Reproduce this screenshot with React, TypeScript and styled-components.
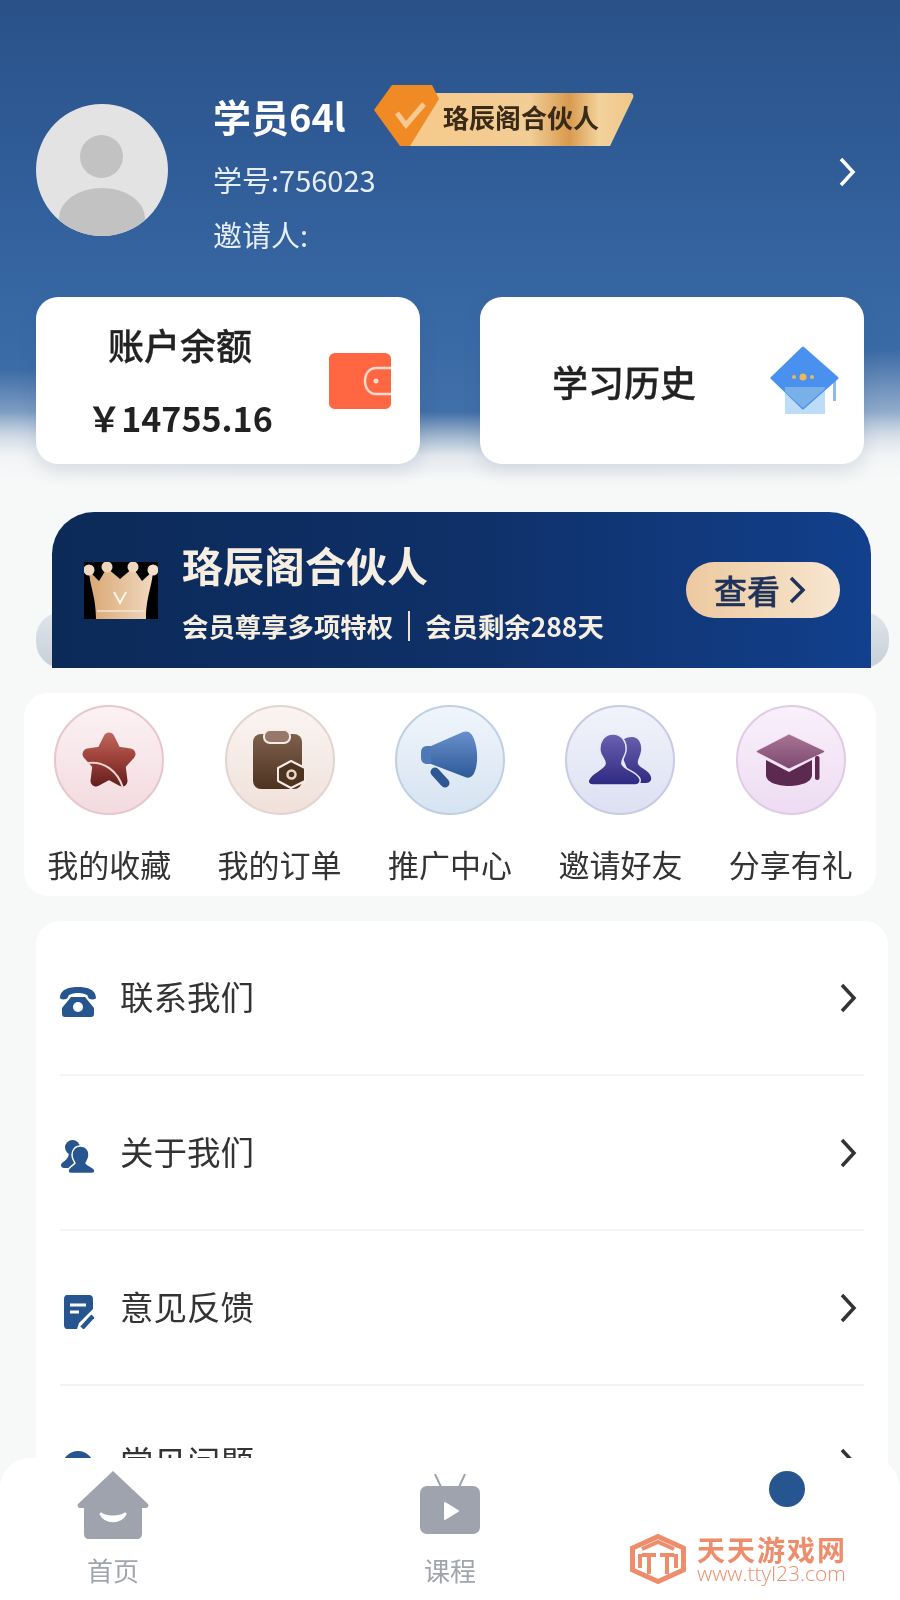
import * as React from "react";
import styled, { createGlobalStyle } from "styled-components";

const GlobalStyle = createGlobalStyle`
  html, body {
    margin: 0;
    padding: 0;
    background: #f7f8f8;
  }
  * {
    box-sizing: border-box;
  }
`;

type Shortcut = {
  label: string;
  from: string;
  to: string;
  ring: string;
  icon: React.ReactNode;
};

const shortcuts: Shortcut[] = [
  { label: "我的收藏", from: "#fbf1f3", to: "#f3dbe0", ring: "#e8c6cd", icon: <StarIcon /> },
  { label: "我的订单", from: "#faf5f2", to: "#f0e0d9", ring: "#e4d3d0", icon: <OrderIcon /> },
  { label: "推广中心", from: "#f0f5fc", to: "#d6e3f1", ring: "#bfd0e4", icon: <MegaphoneIcon /> },
  { label: "邀请好友", from: "#f1f3fb", to: "#dde0f2", ring: "#c8cbe3", icon: <FriendsIcon /> },
  { label: "分享有礼", from: "#f9f0fb", to: "#eedcf2", ring: "#e0cae6", icon: <CapIcon /> },
];

const menuItems = [
  { label: "联系我们", icon: <PhoneIcon /> },
  { label: "关于我们", icon: <PeopleIcon /> },
  { label: "意见反馈", icon: <NoteIcon /> },
  { label: "常见问题", icon: <HelpIcon /> },
];

function StarIcon() {
  return (
    <svg width="60" height="60" viewBox="0 0 60 60">
      <defs>
        <linearGradient id="starFill" gradientUnits="userSpaceOnUse" x1="0" y1="2" x2="0" y2="58">
          <stop offset="0" stopColor="#c0685c" />
          <stop offset="0.5" stopColor="#9a3f38" />
          <stop offset="1" stopColor="#5f1c1c" />
        </linearGradient>
      </defs>
      <path
        d="M30 8 L37 22 L51 24 L41 35 L43 51 L30 44 L17 51 L19 35 L9 24 L23 22 Z"
        fill="url(#starFill)"
        stroke="url(#starFill)"
        strokeWidth="11"
        strokeLinejoin="round"
      />
      <path d="M9 33 C25 31 39 41 44 58" fill="none" stroke="#efd6d2" strokeWidth="2" />
    </svg>
  );
}

function OrderIcon() {
  return (
    <svg width="56" height="60" viewBox="0 0 56 60">
      <defs>
        <linearGradient id="orderFill" x1="0" y1="0" x2="0" y2="1">
          <stop offset="0" stopColor="#7d5f4e" />
          <stop offset="1" stopColor="#4e3320" />
        </linearGradient>
      </defs>
      <rect x="1" y="4" width="49" height="55" rx="8" fill="url(#orderFill)" />
      <rect x="12" y="0" width="26" height="13" rx="6" fill="#97786a" stroke="#f6ece7" strokeWidth="2" />
      <path d="M39 31 L53 38 V51 L39 58 L26 51 V38 Z" fill="#4e3320" stroke="#f6ece7" strokeWidth="2" strokeLinejoin="round" />
      <circle cx="39.5" cy="44.5" r="4" fill="none" stroke="#e8d8c8" strokeWidth="2.5" />
    </svg>
  );
}

function MegaphoneIcon() {
  return (
    <svg width="58" height="58" viewBox="0 0 58 58">
      <defs>
        <linearGradient id="hornFill" x1="0" y1="0" x2="0" y2="1">
          <stop offset="0" stopColor="#6a90cc" />
          <stop offset="1" stopColor="#2d5a98" />
        </linearGradient>
      </defs>
      <path d="M6 15 H11 V33 H6 C2 33 0 30 0 27 V21 C0 18 2 15 6 15 Z" fill="#4f78b8" />
      <path d="M10 15 L42 1 C48 -1 51 3 53 8 C57 18 57 32 54 40 C52 46 48 48 44 46 L10 33 Z" fill="url(#hornFill)" />
      <path d="M14 41 L24 52" stroke="#2f5792" strokeWidth="9" strokeLinecap="round" />
    </svg>
  );
}

function FriendsIcon() {
  return (
    <svg width="64" height="52" viewBox="0 0 64 52">
      <defs>
        <linearGradient id="friendFill" gradientUnits="userSpaceOnUse" x1="0" y1="0" x2="0" y2="52">
          <stop offset="0" stopColor="#6c60b0" />
          <stop offset="1" stopColor="#2c2880" />
        </linearGradient>
      </defs>
      <path
        d="M44 3 C51 3 54 10 53 17 C52 23 49 26 50 30 C52 34 62 37 63 43 C64 47 61 49 57 49 H45 L30 12 C33 6 38 3 44 3 Z"
        fill="url(#friendFill)"
      />
      <path
        d="M25 0 C34 0 39 8 38 17 C37 23 33 26 34 30 C36 36 49 37 52 45 C53 49 50 51 47 51 H5 C1 51 -1 48 1 45 C4 38 15 36 17 30 C18 26 13 23 12 17 C11 8 16 0 25 0 Z"
        fill="url(#friendFill)"
        stroke="#e6e8f7"
        strokeWidth="1.5"
      />
    </svg>
  );
}

function CapIcon() {
  return (
    <svg width="70" height="54" viewBox="0 0 70 54">
      <defs>
        <linearGradient id="capTop" x1="0" y1="0" x2="0" y2="1">
          <stop offset="0" stopColor="#a87596" />
          <stop offset="1" stopColor="#7d4a70" />
        </linearGradient>
      </defs>
      <path d="M10 27 L33 39 L56 27 V42 C56 49 45 53 33 53 C21 53 10 49 10 42 Z" fill="#5c2a50" />
      <path
        d="M33 1 L67 17 C69 18 69 19 67 20 L35 35 C34 36 32 36 31 35 L2 20 C0 19 0 18 2 17 Z"
        fill="url(#capTop)"
        stroke="#f4e6f5"
        strokeWidth="0.8"
      />
      <rect x="59" y="23" width="4.5" height="24" rx="2" fill="#5c2a50" />
    </svg>
  );
}

function WalletIcon() {
  return (
    <svg width="62" height="56" viewBox="0 0 62 56">
      <path d="M7 0 H55 C59 0 62 2 62 6 V50 C62 54 59 56 55 56 H7 C3 56 0 54 0 50 V6 C0 2 3 0 7 0 Z" fill="#ff6642" />
      <path d="M62 15 H47 C41 15 36 20 36 28 C36 36 41 41 47 41 H62" fill="#ff6642" stroke="#ffdccf" strokeWidth="2.5" />
      <circle cx="47" cy="28" r="2.5" fill="#ffdccf" />
    </svg>
  );
}

function HatIcon() {
  return (
    <svg width="70" height="68" viewBox="0 0 70 68">
      <rect x="15" y="40" width="40" height="28" fill="#bcdcf8" />
      <rect x="63" y="32" width="3" height="23" fill="#8dbcec" />
      <path d="M33 2 L67 32 L33 62 L2 32 Z" fill="#4a90ee" stroke="#4a90ee" strokeWidth="3" strokeLinejoin="round" />
      <path d="M15 46 L33 62 L55 43 V41 H15 Z" fill="#7ab0e8" />
      <circle cx="33" cy="31" r="3.5" fill="#e9b95a" />
      <circle cx="24" cy="31" r="2" fill="#e9b95a" />
      <circle cx="42" cy="31" r="2" fill="#e9b95a" />
    </svg>
  );
}

function CrownIcon() {
  return (
    <svg width="74" height="57" viewBox="0 0 74 57">
      <defs>
        <linearGradient id="crownFill" x1="0" y1="0" x2="1" y2="0">
          <stop offset="0" stopColor="#d9a874" />
          <stop offset="1" stopColor="#f0d8bf" />
        </linearGradient>
      </defs>
      <rect width="74" height="57" fill="#000" />
      <path d="M5 9 L15 19 L23 6 L36 17 L49 6 L58 19 L69 9 C68 25 62 35 62 57 H12 C12 35 6 25 5 9 Z" fill="url(#crownFill)" />
      <circle cx="5" cy="8" r="5.5" fill="#efd8c2" />
      <circle cx="23" cy="5" r="5.5" fill="#efd5ba" />
      <circle cx="49" cy="5" r="5.5" fill="#f0d8c0" />
      <circle cx="69" cy="8" r="5.5" fill="#f3e0cc" />
      <path d="M30 30 L36 41 L42 30" fill="none" stroke="#fff4e6" strokeWidth="2" />
      <path d="M13 49 H61" stroke="#f6e5d0" strokeWidth="1.5" />
    </svg>
  );
}

function VipBadgeArt() {
  return (
    <svg width="260" height="61" viewBox="0 0 260 61">
      <defs>
        <linearGradient id="goldFill" x1="0" y1="0" x2="1" y2="0">
          <stop offset="0" stopColor="#f7c98a" />
          <stop offset="0.55" stopColor="#f2cd96" />
          <stop offset="0.72" stopColor="#d89a4e" />
          <stop offset="0.85" stopColor="#f3d29c" />
          <stop offset="1" stopColor="#efc688" />
        </linearGradient>
      </defs>
      <path d="M40 8 H256 C259 8 260 10 259 13 L236 61 H30 Z" fill="url(#goldFill)" />
      <path d="M0 25 L18 0 H58 L65 14 L36 61 H26 Z" fill="#f08a24" />
      <path d="M23 28 L32 40 L50 19" fill="none" stroke="#f5c990" strokeWidth="5" />
    </svg>
  );
}

function PhoneIcon() {
  return (
    <svg width="36" height="32" viewBox="0 0 36 32">
      <path d="M0 12 C0 3 10 1 18 1 C26 1 36 3 36 12 C36 14 28 14 28 11 C28 8 22 7 18 7 C14 7 8 8 8 11 C8 14 0 14 0 12 Z" fill="#265590" />
      <path d="M11 11 H25 L34 22 V28 C34 30 33 31 31 31 H5 C3 31 2 30 2 28 V22 Z" fill="#265590" />
      <circle cx="18" cy="21" r="5" fill="#fff" />
    </svg>
  );
}

function PeopleIcon() {
  return (
    <svg width="35" height="34" viewBox="0 0 35 34">
      <circle cx="11.5" cy="7.5" r="7.5" fill="#265590" />
      <path d="M8 12 H15 L12 28 H3 C0 28 -1 25 1 23 C3 21 8 19 8 12 Z" fill="#265590" />
      <path
        d="M19.5 6 C25 6 28 10 28 15 C28 19 26 21 25 23 C27 26 34 27 34 31 C34 33 33 33.5 31 33.5 H10 C8 33.5 7 33 7 31 C7 27 12 26 14 23 C13 21 11 19 11 15 C11 10 14 6 19.5 6 Z"
        fill="#265590"
        stroke="#fff"
        strokeWidth="1.5"
      />
    </svg>
  );
}

function NoteIcon() {
  return (
    <svg width="31" height="34" viewBox="0 0 31 34">
      <path d="M4 0 H26 C29 0 30 2 30 4 V14 L16 28 L14 34 H4 C2 34 1 32 1 30 V4 C1 2 2 0 4 0 Z" fill="#265590" />
      <path d="M7 10 H23 M7 17 H16" stroke="#fff" strokeWidth="3" />
      <path d="M19 33 L30 21" stroke="#265590" strokeWidth="4.5" />
    </svg>
  );
}

function HelpIcon() {
  return (
    <svg width="32" height="32" viewBox="0 0 32 32">
      <circle cx="16" cy="16" r="16" fill="#265590" />
    </svg>
  );
}

function Chevron({ color }: { color: string }) {
  return (
    <svg width="18" height="30" viewBox="0 0 18 30">
      <path d="M3 2 L15 15 L3 28" fill="none" stroke={color} strokeWidth="3.5" />
    </svg>
  );
}

function HomeIcon() {
  return (
    <svg width="72" height="68" viewBox="0 0 72 68">
      <path
        d="M36 0 L71 33 C72 35 71 37 69 37 H65 V63 C65 66 63 68 60 68 H12 C9 68 7 66 7 63 V37 H3 C1 37 0 35 1 33 Z"
        fill="#9fa3ae"
      />
      <path d="M24 43 C29 52 43 52 48 43 C43 47 29 47 24 43 Z" fill="#fff" stroke="#fff" strokeWidth="3" strokeLinejoin="round" />
    </svg>
  );
}

function TvIcon() {
  return (
    <svg width="60" height="60" viewBox="0 0 60 60">
      <path d="M21 13 L15 0 M39 13 L45 0" stroke="#9fa3ae" strokeWidth="2" />
      <rect x="0" y="12" width="60" height="48" rx="7" fill="#9fa3ae" />
      <path d="M25 29 L38 37 L25 45 Z" fill="#fff" stroke="#fff" strokeWidth="2" strokeLinejoin="round" />
    </svg>
  );
}

function SiteLogo() {
  return (
    <svg width="56" height="50" viewBox="0 0 56 50">
      <path d="M28 2.5 L53.5 14 V36 L28 47.5 L2.5 36 V14 Z" fill="none" stroke="#ee8d6c" strokeWidth="5" />
      <path d="M12 15 L28 8 L44 15 M12 21 H26 M30 21 H44 M19 21 V40 M37 21 V40 M10 20 V34 M46 20 V34" stroke="#ee8d6c" strokeWidth="4" fill="none" />
    </svg>
  );
}

export default function App() {
  return (
    <>
      <GlobalStyle />
      <Page>
        <Hero>
          <Profile>
            <Avatar>
              <AvatarHead />
              <AvatarBody />
            </Avatar>
            <Info>
              <NameRow>
                <Name>学员64l</Name>
                <VipBadge>
                  <VipBadgeArt />
                  <VipBadgeText>珞辰阁合伙人</VipBadgeText>
                </VipBadge>
              </NameRow>
              <InfoLine>学号:756023</InfoLine>
              <InfoLine>邀请人:</InfoLine>
            </Info>
            <ProfileChevron>
              <Chevron color="#fff" />
            </ProfileChevron>
          </Profile>
          <StatCards>
            <StatCard>
              <StatText>
                <StatTitle>账户余额</StatTitle>
                <StatAmount>￥14755.16</StatAmount>
              </StatText>
              <WalletSlot>
                <WalletIcon />
              </WalletSlot>
            </StatCard>
            <StatCard>
              <StatText>
                <StatTitle>学习历史</StatTitle>
              </StatText>
              <HatSlot>
                <HatIcon />
              </HatSlot>
            </StatCard>
          </StatCards>
        </Hero>

        <BannerWrap>
          <BannerBack />
          <Banner>
            <CrownIcon />
            <BannerText>
              <BannerTitle>珞辰阁合伙人</BannerTitle>
              <BannerSub>
                <span>会员尊享多项特权</span>
                <BannerDivider />
                <span>会员剩余288天</span>
              </BannerSub>
            </BannerText>
            <ViewButton>
              查看
              <svg width="17" height="28" viewBox="0 0 17 28">
                <path d="M2 2 L14 14 L2 26" fill="none" stroke="#1f3358" strokeWidth="3.5" />
              </svg>
            </ViewButton>
          </Banner>
        </BannerWrap>

        <ShortcutCard>
          {shortcuts.map((item) => (
            <ShortcutItem key={item.label}>
              <ShortcutCircle $from={item.from} $to={item.to} $ring={item.ring}>
                {item.icon}
              </ShortcutCircle>
              <ShortcutLabel>{item.label}</ShortcutLabel>
            </ShortcutItem>
          ))}
        </ShortcutCard>

        <MenuCard>
          {menuItems.map((item) => (
            <MenuRow key={item.label}>
              <MenuIcon>{item.icon}</MenuIcon>
              <MenuLabel>{item.label}</MenuLabel>
              <Chevron color="#333" />
            </MenuRow>
          ))}
        </MenuCard>

        <TabBar>
          <Tab>
            <TabIcon>
              <HomeIcon />
            </TabIcon>
            <TabLabel>首页</TabLabel>
          </Tab>
          <MiddleTab>
            <TabIcon $inset={3}>
              <TvIcon />
            </TabIcon>
            <TabLabel>课程</TabLabel>
          </MiddleTab>
          <Tab>
            <ActiveDot />
          </Tab>
        </TabBar>

        <Watermark>
          <SiteLogo />
          <WatermarkText>
            <WatermarkName>天天游戏网</WatermarkName>
            <WatermarkUrl>www.ttyl23.com</WatermarkUrl>
          </WatermarkText>
        </Watermark>
      </Page>
    </>
  );
}

const Page = styled.div`
  position: relative;
  width: 900px;
  height: 1600px;
  overflow: hidden;
  background: #f7f8f8;
  font-family: "Noto Sans CJK SC", "Noto Sans", sans-serif;
  filter: blur(0.7px);
`;

const Hero = styled.section`
  height: 490px;
  padding: 85px 36px 0;
  background:
    radial-gradient(420px 100px at 0 470px, rgba(247, 248, 248, 0.8), rgba(247, 248, 248, 0)),
    radial-gradient(420px 120px at 900px 470px, rgba(247, 248, 248, 0.85), rgba(247, 248, 248, 0)),
    linear-gradient(
      180deg,
      #2a5289 0,
      #2f5b96 150px,
      #3869a5 320px,
      #416fa8 412px,
      #a0b6cf 436px,
      #e3e8ee 456px,
      #f7f8f8 480px
    );
`;

const Profile = styled.div`
  display: flex;
  align-items: flex-start;
  height: 184px;
`;

const Avatar = styled.div`
  position: relative;
  flex: none;
  width: 132px;
  height: 132px;
  margin-top: 19px;
  border-radius: 50%;
  overflow: hidden;
  background: #e3e3e3;
`;

const AvatarHead = styled.div`
  position: absolute;
  left: 44px;
  top: 31px;
  width: 43px;
  height: 43px;
  border-radius: 50%;
  background: #c2c2c2;
`;

const AvatarBody = styled.div`
  position: absolute;
  left: 23px;
  top: 84px;
  width: 86px;
  height: 60px;
  border-radius: 50%;
  background: #c2c2c2;
`;

const Info = styled.div`
  flex: 1;
  margin-left: 45px;
  color: #fff;
`;

const NameRow = styled.div`
  display: flex;
  align-items: flex-start;
  height: 67px;
`;

const Name = styled.div`
  width: 161px;
  margin-top: 6px;
  font-size: 38px;
  line-height: 50px;
  font-weight: 700;
`;

const VipBadge = styled.div`
  position: relative;
  width: 260px;
  height: 61px;
`;

const VipBadgeText = styled.span`
  position: absolute;
  left: 69px;
  top: 12px;
  font-size: 26px;
  line-height: 40px;
  font-weight: 700;
  white-space: nowrap;
  color: #3a2a18;
`;

const InfoLine = styled.div`
  font-size: 29px;
  line-height: 55px;
  color: #e6edf6;
`;

const ProfileChevron = styled.div`
  flex: none;
  margin: 72px 8px 0 0;
`;

const StatCards = styled.div`
  display: grid;
  grid-template-columns: 384px 384px;
  gap: 60px;
  margin-top: 28px;
`;

const StatCard = styled.div`
  display: flex;
  align-items: center;
  height: 167px;
  border-radius: 22px;
  background: #fff;
  box-shadow: 0 8px 18px rgba(50, 70, 100, 0.13);
`;

const StatText = styled.div`
  flex: none;
  display: flex;
  flex-direction: column;
  align-items: center;
  gap: 24px;
  width: 288px;
  color: #222;
`;

const StatTitle = styled.div`
  font-size: 36px;
  line-height: 50px;
  font-weight: 500;
  -webkit-text-stroke: 0.3px #222;
`;

const StatAmount = styled.div`
  font-size: 34px;
  line-height: 50px;
  font-weight: 700;
`;

const WalletSlot = styled.div`
  display: flex;
  margin-left: 5px;
`;

const HatSlot = styled.div`
  display: flex;
  margin: -2px 0 0 2px;
`;

const BannerWrap = styled.div`
  position: relative;
  height: 156px;
  margin: 22px 13px 0 36px;
`;

const BannerBack = styled.div`
  position: absolute;
  left: 0;
  right: -2px;
  bottom: 0;
  height: 56px;
  border-radius: 26px;
  background: linear-gradient(180deg, #dfe5ea 0, #c6d0da 100%);
`;

const Banner = styled.div`
  position: relative;
  display: flex;
  align-items: center;
  height: 156px;
  margin: 0 16px;
  padding: 0 31px 0 32px;
  border-radius: 42px 42px 0 0;
  background: linear-gradient(90deg, #0b2a58 0, #0f3068 50%, #12408c 100%);
`;

const BannerText = styled.div`
  flex: 1;
  margin-left: 24px;
  color: #f6eee0;
`;

const BannerTitle = styled.div`
  font-size: 41px;
  line-height: 56px;
  font-weight: 700;
`;

const BannerSub = styled.div`
  display: flex;
  align-items: center;
  margin-top: 16px;
  font-size: 26.4px;
  line-height: 36px;
  font-weight: 700;
`;

const BannerDivider = styled.i`
  width: 2px;
  height: 30px;
  margin: 0 15px;
  background: #e8e2d6;
`;

const ViewButton = styled.div`
  display: flex;
  align-items: center;
  justify-content: center;
  gap: 9px;
  width: 154px;
  height: 56px;
  padding-right: 6px;
  border-radius: 28px;
  background: linear-gradient(90deg, #edc9a0 0, #f7e6d0 100%);
  color: #1f3358;
  font-size: 33px;
  font-weight: 500;
  -webkit-text-stroke: 0.4px #1f3358;
`;

const ShortcutCard = styled.div`
  display: grid;
  grid-template-columns: repeat(5, 1fr);
  width: 852px;
  height: 203px;
  margin: 25px 0 0 24px;
  padding-top: 12px;
  border-radius: 24px;
  background: #fff;
`;

const ShortcutItem = styled.div`
  display: flex;
  flex-direction: column;
  align-items: center;
`;

const ShortcutCircle = styled.div<{ $from: string; $to: string; $ring: string }>`
  display: flex;
  align-items: center;
  justify-content: center;
  width: 110px;
  height: 110px;
  border-radius: 50%;
  border: 2.5px solid ${(p) => p.$ring};
  background: linear-gradient(180deg, ${(p) => p.$from}, ${(p) => p.$to});
`;

const ShortcutLabel = styled.div`
  margin-top: 27px;
  font-size: 31px;
  line-height: 44px;
  white-space: nowrap;
  color: #333;
`;

const MenuCard = styled.div`
  width: 852px;
  height: 600px;
  margin: 25px 0 0 36px;
  padding: 0 24px;
  border-radius: 24px;
  background: #fff;
`;

const MenuRow = styled.div`
  display: flex;
  align-items: center;
  height: 155px;
  padding-right: 7px;
  border-bottom: 2px solid #f3f4f4;
`;

const MenuIcon = styled.div`
  display: flex;
  justify-content: center;
  width: 36px;
  margin-top: 8px;
`;

const MenuLabel = styled.div`
  flex: 1;
  margin: -3px 0 0 24px;
  font-size: 33.5px;
  line-height: 46px;
  color: #333;
`;

const TabBar = styled.nav`
  position: absolute;
  left: 0;
  right: 0;
  bottom: 0;
  display: flex;
  justify-content: space-between;
  height: 142px;
  border-radius: 30px 30px 0 0;
  background: #fff;
`;

const Tab = styled.div`
  display: flex;
  flex-direction: column;
  align-items: center;
  width: 226px;
  padding-top: 13px;
`;

const MiddleTab = styled(Tab)`
  width: 448px;
`;

const TabIcon = styled.div<{ $inset?: number }>`
  display: flex;
  align-items: flex-start;
  height: 68px;
  padding-top: ${(p) => p.$inset ?? 0}px;
`;

const TabLabel = styled.div`
  margin-top: 13px;
  font-size: 26px;
  line-height: 36px;
  color: #a0a4ad;
`;

const ActiveDot = styled.div`
  width: 36px;
  height: 36px;
  border-radius: 50%;
  background: #265590;
`;

const Watermark = styled.div`
  position: absolute;
  left: 630px;
  top: 1534px;
  display: flex;
  gap: 11px;
`;

const WatermarkText = styled.div`
  display: flex;
  flex-direction: column;
  padding-top: 3px;
  color: #ee8d6c;
`;

const WatermarkName = styled.div`
  font-size: 28px;
  line-height: 24px;
  letter-spacing: 2px;
  font-weight: 700;
  white-space: nowrap;
`;

const WatermarkUrl = styled.div`
  margin-top: 1px;
  font-family: "Open Sans", sans-serif;
  font-size: 21px;
  line-height: 22px;
  font-weight: 300;
  white-space: nowrap;
`;
